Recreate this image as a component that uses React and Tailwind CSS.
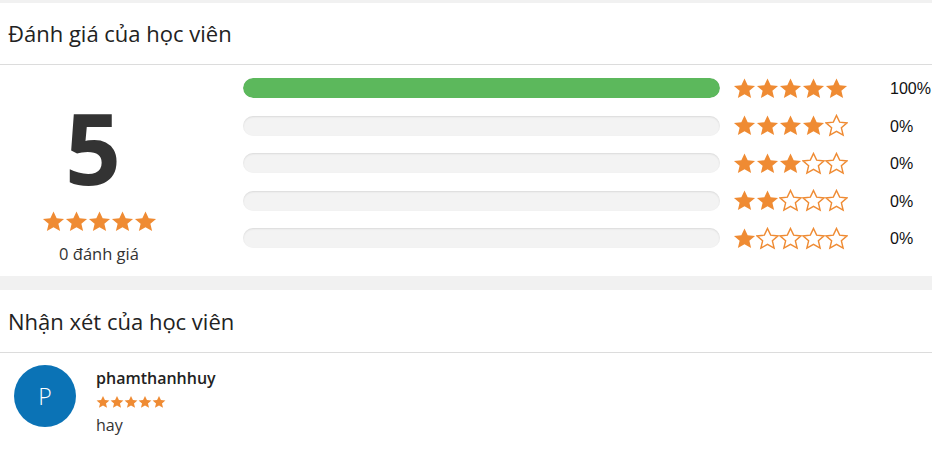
import React from "react";

const STAR = "M12 1l3.3 7 7.7.8-5.9 5.1 1.8 7.6L12 17.6l-6.9 3.9 1.8-7.6L1 8.8l7.7-.8z";

function Star({ filled, size }) {
  return (
    <svg width={size} height={size} viewBox="0 0 24 23" className="shrink-0">
      {filled ? (
        <path d={STAR} fill="#ef8b33" />
      ) : (
        <path d={STAR} fill="none" stroke="#ef8b33" strokeWidth="1.5" strokeLinejoin="miter" />
      )}
    </svg>
  );
}

function Stars({ count, size }) {
  return (
    <div className="flex">
      {[1, 2, 3, 4, 5].map(i => (
        <Star key={i} filled={i <= count} size={size} />
      ))}
    </div>
  );
}

const rows = [
  { stars: 5, pct: 100 },
  { stars: 4, pct: 0 },
  { stars: 3, pct: 0 },
  { stars: 2, pct: 0 },
  { stars: 1, pct: 0 },
];

export default function App() {
  return (
    <div className="w-[932px] h-[471px] bg-white text-[#333] overflow-hidden" style={{ fontFamily: '"Open Sans", sans-serif' }}>
      <div className="h-[3px] bg-[#f1f1f1]" />
      <div className="h-[62px] flex items-center px-2 border-b border-[#dcdcdc]">
        <h2 className="text-[22px] text-[#222]">Đánh giá của học viên</h2>
      </div>
      <div className="h-[211px] flex">
        <div className="w-[198px] flex flex-col items-center pt-[33px]">
          <div className="text-[98px] font-bold leading-[98px] text-[#333] -ml-3">5</div>
          <div className="mt-[14px] flex">
            <Stars count={5} size={23} />
          </div>
          <div className="mt-[9px] text-[16.5px] text-[#333]">0 đánh giá</div>
        </div>
        <div className="flex flex-col pt-[13px] pl-[45px] gap-[17.5px]">
          {rows.map(r => (
            <div key={r.stars} className="flex items-center h-[20px]">
              <div className="w-[477px] h-[20px] rounded-full bg-[#f3f3f3] shadow-[inset_0_1px_2px_rgba(0,0,0,0.1)] overflow-hidden">
                <div className="h-full rounded-full bg-[#5cb85c]" style={{ width: `${r.pct}%` }} />
              </div>
              <div className="ml-[13px]">
                <Stars count={r.stars} size={23} />
              </div>
              <div className="ml-[42px] mt-[2px] text-[16px] text-[#111]" style={{ fontFamily: '"Liberation Sans", Arial, sans-serif' }}>
                {r.pct}%
              </div>
            </div>
          ))}
        </div>
      </div>
      <div className="h-[14px] bg-[#f1f1f1]" />
      <div className="h-[63px] flex items-center px-2 border-b border-[#dcdcdc]">
        <h2 className="text-[22px] text-[#222]">Nhận xét của học viên</h2>
      </div>
      <div className="flex pl-[14px] pt-[12px]">
        <div className="w-[62px] h-[62px] rounded-full bg-[#0b73b6] flex items-center justify-center text-white text-[23px] font-light">
          P
        </div>
        <div className="ml-[20px] pt-[3px]">
          <div className="text-[16px] font-semibold text-[#222] leading-[20px]">phamthanhhuy</div>
          <div className="mt-[7px]">
            <Stars count={5} size={14} />
          </div>
          <div className="mt-[5px] text-[16px] leading-[22px] text-[#333]">hay</div>
        </div>
      </div>
    </div>
  );
}
